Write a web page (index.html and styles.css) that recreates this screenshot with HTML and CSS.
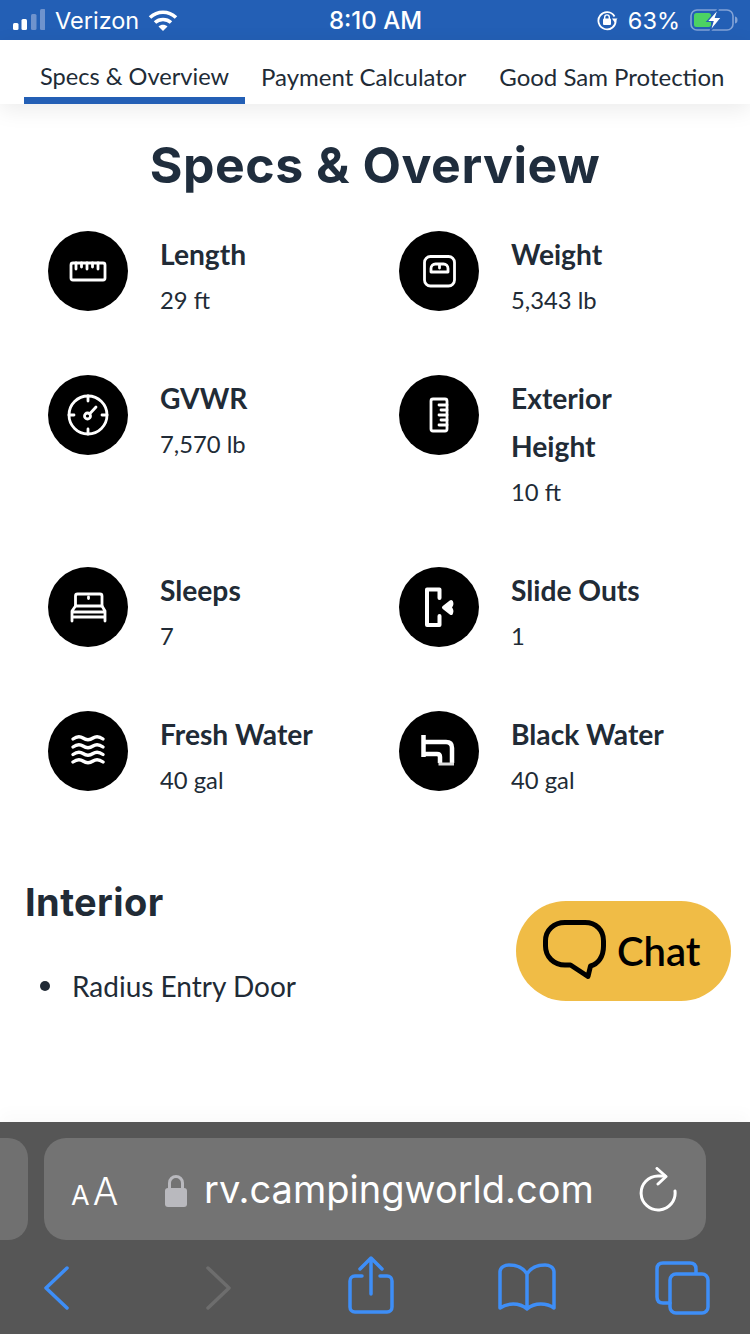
FILE: index.html
```html
<!DOCTYPE html>
<html lang="en">
<head>
    <meta charset="UTF-8">
    <meta name="viewport" content="width=device-width, initial-scale=1.0">
    <title>Specs &amp; Overview</title>
    <link rel="stylesheet" href="styles.css">
</head>
<body>

<div class="phone">
    <!-- iOS status bar -->
    <div class="status-bar">
        <div class="status-left">
            <svg class="signal" width="32" height="22" viewBox="0 0 32 22">
                <rect x="0" y="14" width="5.5" height="7" rx="1.5" fill="#fff"/>
                <rect x="8.5" y="10" width="5.5" height="11" rx="1.5" fill="#fff"/>
                <rect x="18" y="5" width="5.5" height="16" rx="1.5" fill="#6f93cd"/>
                <rect x="27" y="0" width="5.5" height="21" rx="1.5" fill="#6f93cd"/>
            </svg>
            <span>Verizon</span>
            <svg class="wifi" width="30" height="22" viewBox="0 0 30 22">
                <path d="M2 8.5C9.5 1.5 20.5 1.5 28 8.5" fill="none" stroke="#fff" stroke-width="3.6"/>
                <path d="M7 13.5C11.5 9.5 18.5 9.5 23 13.5" fill="none" stroke="#fff" stroke-width="3.6"/>
                <path d="M10.5 17.5C13 15 17 15 19.5 17.5L15 22Z" fill="#fff"/>
            </svg>
        </div>
        <div class="status-time">8:10 AM</div>
        <div class="status-right">
            <svg class="rotlock" width="22" height="22" viewBox="0 0 22 22">
                <path d="M18.5 7.5A8.6 8.6 0 1 0 19.6 11" fill="none" stroke="#fff" stroke-width="1.8"/>
                <path d="M16 9.5H21.5L18.7 13.5Z" fill="#fff"/>
                <rect x="7" y="9.5" width="8" height="6.5" rx="1" fill="#fff"/>
                <path d="M8.7 10V8.2a2.3 2.3 0 0 1 4.6 0V10" fill="none" stroke="#fff" stroke-width="1.4"/>
            </svg>
            <span>63%</span>
            <svg class="battery" width="48" height="24" viewBox="0 0 48 24">
                <rect x="1" y="2" width="42" height="20" rx="6" fill="none" stroke="#83a3d6" stroke-width="1.6"/>
                <rect x="4" y="5" width="17" height="14" rx="2.5" fill="#4cd263"/>
                <path d="M45 8.5c2 .5 2.5 1.5 2.5 3.5s-.5 3-2.5 3.5Z" fill="#83a3d6"/>
                <path d="M28.5 0.5L17 13.5H23L20 23.5L31.5 9.5H25.5Z" fill="#fff" stroke="#2560b5" stroke-width="1.2"/>
            </svg>
        </div>
    </div>

    <nav class="tabs">
        <a class="tab active">Specs &amp; Overview</a>
        <a class="tab">Payment Calculator</a>
        <a class="tab">Good Sam Protection</a>
    </nav>

    <main class="content">
        <h1>Specs &amp; Overview</h1>

        <div class="spec-grid">
            <div class="spec">
                <div class="spec-icon">
                    <svg viewBox="0 0 80 80" width="80" height="80">
                        <rect x="23" y="32" width="34" height="17" rx="2" class="line"/>
                        <path d="M28 32V38M33.500 32V36M39 32V38M44.500 32V36M50 32V38" class="line"/>
                    </svg>
                </div>
                <div>
                    <div class="spec-label">Length</div>
                    <div class="spec-value">29 ft</div>
                </div>
            </div>
            <div class="spec">
                <div class="spec-icon">
                    <svg viewBox="0 0 80 80" width="80" height="80">
                        <rect x="25.500" y="25.500" width="30" height="29.500" rx="6" class="line"/>
                        <path d="M32 41V37.500a4.500 4.500 0 0 1 4.500-4.500H44.500a4.500 4.500 0 0 1 4.500 4.500V41ZM40.500 33V37" class="line"/>
                    </svg>
                </div>
                <div>
                    <div class="spec-label">Weight</div>
                    <div class="spec-value">5,343 lb</div>
                </div>
            </div>
            <div class="spec">
                <div class="spec-icon">
                    <svg viewBox="0 0 80 80" width="80" height="80">
                        <circle cx="40" cy="40" r="19" class="line"/>
                        <path d="M40 21V26M40 54V59M21 40H26M54 40H59" class="line"/>
                        <circle cx="39.500" cy="41" r="3" class="line"/>
                        <path d="M42 38.500L48 32" class="line"/>
                    </svg>
                </div>
                <div>
                    <div class="spec-label">GVWR</div>
                    <div class="spec-value">7,570 lb</div>
                </div>
            </div>
            <div class="spec">
                <div class="spec-icon">
                    <svg viewBox="0 0 80 80" width="80" height="80">
                        <rect x="32" y="24" width="16" height="32" rx="2" class="line"/>
                        <path d="M48 30H40M48 35H42M48 40H40M48 45H42M48 50H40" class="line"/>
                    </svg>
                </div>
                <div>
                    <div class="spec-label">Exterior Height</div>
                    <div class="spec-value">10 ft</div>
                </div>
            </div>
            <div class="spec">
                <div class="spec-icon">
                    <svg viewBox="0 0 80 80" width="80" height="80">
                        <path d="M27.500 39V29a2 2 0 0 1 2-2H52a2 2 0 0 1 2 2V39" class="line"/>
                        <path d="M24 54V44L27.500 39H54L57 44V54M24 45H57M24 50H57M40.500 30V31.500" class="line"/>
                    </svg>
                </div>
                <div>
                    <div class="spec-label">Sleeps</div>
                    <div class="spec-value">7</div>
                </div>
            </div>
            <div class="spec">
                <div class="spec-icon">
                    <svg viewBox="0 0 80 80" width="80" height="80">
                        <path d="M40.500 31V22.500H28V58H40.500V49" class="line thick"/>
                        <path d="M45 40.500L52 35C53 37 52.500 38.500 50.500 40.500C52.500 42.500 53 44 52 46Z" fill="#fff" stroke="#fff" stroke-width="4" stroke-linejoin="round"/>
                    </svg>
                </div>
                <div>
                    <div class="spec-label">Slide Outs</div>
                    <div class="spec-value">1</div>
                </div>
            </div>
            <div class="spec">
                <div class="spec-icon">
                    <svg viewBox="0 0 80 80" width="80" height="80">
                        <path d="M25 28C29 25 32 25 35 27C38 29 42 29 45 27C48 25 51 25 55 28" class="line wave"/>
                        <path d="M25 36C29 33 32 33 35 35C38 37 42 37 45 35C48 33 51 33 55 36" class="line wave"/>
                        <path d="M25 43.500C29 40.500 32 40.500 35 42.500C38 44.500 42 44.500 45 42.500C48 40.500 51 40.500 55 43.500" class="line wave"/>
                        <path d="M25 51C29 48 32 48 35 50C38 52 42 52 45 50C48 48 51 48 55 51" class="line wave"/>
                    </svg>
                </div>
                <div>
                    <div class="spec-label">Fresh Water</div>
                    <div class="spec-value">40 gal</div>
                </div>
            </div>
            <div class="spec">
                <div class="spec-icon">
                    <svg viewBox="0 0 80 80" width="80" height="80">
                        <path d="M24.500 24V46M24.500 31H47C51 31 53 33 53 37V52M24.500 43H38C40 43 41 44 41 46V52" class="pipe"/>
                        <path d="M39.500 53H55" class="pipe-end"/>
                    </svg>
                </div>
                <div>
                    <div class="spec-label">Black Water</div>
                    <div class="spec-value">40 gal</div>
                </div>
            </div>
        </div>

        <section class="interior">
            <h2>Interior</h2>
            <ul>
                <li>Radius Entry Door</li>
            </ul>
        </section>

        <a class="chat">
            <svg width="64" height="60" viewBox="0 0 64 60">
                <path d="M22 2.500H42C53 2.500 60.500 10 60.500 21V26C60.500 37 55 44 47.500 46L45 56.500L27.500 45H22C11 45 2.500 37 2.500 26V21C2.500 10 11 2.500 22 2.500Z" fill="none" stroke="#000" stroke-width="5" stroke-linejoin="round"/>
            </svg>
            <span>Chat</span>
        </a>
    </main>

    <!-- Safari bottom toolbar -->
    <div class="toolbar">
        <div class="address-row">
            <div class="prev-field"></div>
            <div class="address-field">
                <span class="aa"><small>A</small>A</span>
                <svg class="lock" width="22" height="32" viewBox="0 0 22 32">
                    <rect x="0" y="13" width="22" height="19" rx="3" fill="#b9b9be"/>
                    <path d="M4.500 14V8a6.500 6.500 0 0 1 13 0V14" fill="none" stroke="#b9b9be" stroke-width="3"/>
                </svg>
                <span class="url">rv.campingworld.com</span>
                <svg class="reload" width="38" height="46" viewBox="0 0 38 46">
                    <path d="M36 24A17 17 0 1 1 19 9H26" fill="none" stroke="#fff" stroke-width="3" stroke-linecap="round"/>
                    <path d="M18 1.500L27 9.500L19 17" fill="none" stroke="#fff" stroke-width="3" stroke-linecap="round" stroke-linejoin="round"/>
                </svg>
            </div>
        </div>
        <div class="tool-row">
            <svg class="tool-back" width="25" height="44" viewBox="0 0 25 44">
                <path d="M23 2L2 22L23 42" class="tool-line"/>
            </svg>
            <svg class="tool-forward" width="25" height="44" viewBox="0 0 25 44">
                <path d="M2 2L23 22L2 42" class="tool-line off"/>
            </svg>
            <svg class="tool-share" width="46" height="58" viewBox="0 0 46 58">
                <path d="M14 20H7C4 20 2 22 2 25V51C2 54 4 56 7 56H39C42 56 44 54 44 51V25C44 22 42 20 39 20H32" class="tool-line"/>
                <path d="M23 38V3M12 13L23 2L34 13" class="tool-line"/>
            </svg>
            <svg class="tool-book" width="58" height="48" viewBox="0 0 58 48">
                <path d="M29 11C25 4 18 2 11 2C7 2 2 4 2 9V45C9 40 21 39 29 46C37 39 49 40 56 45V9C56 4 51 2 47 2C40 2 33 4 29 11V46" class="tool-line"/>
            </svg>
            <svg class="tool-tabs" width="55" height="54" viewBox="0 0 55 54">
                <path d="M41 12V8C41 4 39 2 35 2H8C4 2 2 4 2 8V36C2 40 4 42 8 42H15" class="tool-line"/>
                <rect x="15" y="13" width="38" height="39" rx="6" class="tool-line"/>
            </svg>
        </div>
    </div>
</div>

</body>
</html>
```

FILE: styles.css
```css
* {
    box-sizing: border-box;
}
body {
    margin: 0;
    font-family: Lato, "Open Sans", sans-serif;
    color: #212b36;
    background: white;
}
.phone {
    width: 750px;
    height: 1334px;
    display: flex;
    flex-direction: column;
    overflow: hidden;
}

/* status bar */
.status-bar {
    height: 40px;
    flex: none;
    background: #235fb5;
    color: white;
    font-family: Inter, Roboto, sans-serif;
    font-size: 23.5px;
    display: grid;
    grid-template-columns: 1fr auto 1fr;
    align-items: center;
    padding: 0 12px 0 13px;
}
.status-left, .status-right {
    display: flex;
    align-items: center;
}
.status-right {
    justify-content: flex-end;
}
.status-left span {
    margin-left: 10px;
}
.wifi {
    margin-left: 9px;
}
.status-time {
    font-size: 24px;
    font-weight: 500;
}
.status-right span {
    margin: 0 10px;
}

/* tabs */
.tabs {
    height: 64px;
    flex: none;
    display: flex;
    padding-left: 24px;
    gap: 16px;
    background: white;
    box-shadow: 0 6px 22px rgba(0, 0, 0, 0.08);
    position: relative;
    z-index: 2;
}
.tab {
    padding: 0 16px;
    font-size: 23.6px;
    line-height: 73px;
    height: 64px;
    white-space: nowrap;
}
.tab + .tab {
    padding: 0;
    margin-right: 17px;
    font-size: 24px;
}
.tab.active {
    border-bottom: 7px solid #235fb5;
}

/* page content */
.content {
    flex: 1;
    position: relative;
    overflow: hidden;
}
h1 {
    margin: 32px 0 37px;
    font-family: Inter, "Open Sans", sans-serif;
    font-size: 50px;
    letter-spacing: 0.5px;
    line-height: 58px;
    font-weight: 700;
    text-align: center;
    color: #1f2d3d;
}
.spec-grid {
    display: grid;
    grid-template-columns: 351px 351px;
    padding-left: 48px;
    row-gap: 54px;
}
.spec {
    display: flex;
    gap: 32px;
}
.spec-icon {
    width: 80px;
    height: 80px;
    flex: none;
    border-radius: 50%;
    background: black;
}
.spec-icon svg {
    display: block;
}
.line {
    fill: none;
    stroke: white;
    stroke-width: 2.8;
    stroke-linejoin: round;
    stroke-linecap: round;
}
.line.thick {
    stroke-width: 4;
}
.line.wave {
    stroke-width: 3.4;
}
.pipe {
    fill: none;
    stroke: white;
    stroke-width: 4.5;
}
.pipe-end {
    fill: none;
    stroke: #ddd;
    stroke-width: 3;
}
.spec-label {
    font-size: 28.2px;
    line-height: 48px;
    font-weight: 700;
    width: 160px;
    margin: -1px 0 1px;
}
.spec-value {
    font-size: 23.8px;
    line-height: 42px;
}
.interior {
    padding-left: 25px;
    margin-top: 79px;
}
h2 {
    margin: 0;
    font-family: Inter, "Open Sans", sans-serif;
    font-size: 38px;
    letter-spacing: 0.4px;
    line-height: 44px;
    font-weight: 700;
}
ul {
    margin: 40px 0 0;
    padding: 0;
    list-style: none;
    font-size: 28px;
    line-height: 44px;
}
li {
    display: flex;
    align-items: center;
}
li::before {
    content: "";
    width: 10px;
    height: 10px;
    border-radius: 50%;
    background: #212b36;
    margin: 0 22px 0 15px;
}
.chat {
    position: absolute;
    left: 516px;
    top: 797px;
    width: 215px;
    height: 100px;
    border-radius: 50px;
    background: #f0bc46;
    color: black;
    display: flex;
    align-items: center;
    padding-left: 27px;
    gap: 10px;
    font-size: 40px;
    font-weight: 600;
}
.chat svg {
    margin-bottom: 2px;
}

/* safari toolbar */
.toolbar {
    height: 212px;
    flex: none;
    background: #565656;
    position: relative;
    box-shadow: 0 -10px 14px rgba(0, 0, 0, 0.02);
}
.address-row {
    display: flex;
    gap: 16px;
    padding-top: 16px;
}
.prev-field {
    width: 28px;
    height: 102px;
    background: #707070;
    border-radius: 0 20px 20px 0;
}
.address-field {
    width: 662px;
    height: 102px;
    background: #737373;
    border-radius: 22px;
    color: white;
    display: flex;
    align-items: center;
    padding-left: 27px;
}
.aa {
    font-family: Inter, Roboto, sans-serif;
    font-weight: 300;
    font-size: 38px;
    width: 94px;
    line-height: 1;
    margin-top: 4px;
}
.aa small {
    font-size: 27px;
    font-weight: 400;
    margin-right: 3px;
}
.lock {
    margin-top: 4px;
}
.url {
    font-family: Inter, Roboto, sans-serif;
    font-size: 38px;
    margin-left: 17px;
    width: 435px;
    white-space: nowrap;
}
.reload {
    margin-top: 2px;
}
.tool-row {
    display: flex;
    align-items: flex-start;
    padding-left: 44px;
}
.tool-line {
    fill: none;
    stroke: #3e8ef7;
    stroke-width: 3.5;
    stroke-linecap: round;
    stroke-linejoin: round;
}
.tool-line.off {
    stroke: #6d6d6d;
}
.tool-back {
    margin-top: 26px;
}
.tool-forward {
    margin: 26px 0 0 137px;
}
.tool-share {
    margin: 16px 0 0 117px;
}
.tool-book {
    margin: 23px 0 0 104px;
}
.tool-tabs {
    margin: 21px 0 0 99px;
}
```
